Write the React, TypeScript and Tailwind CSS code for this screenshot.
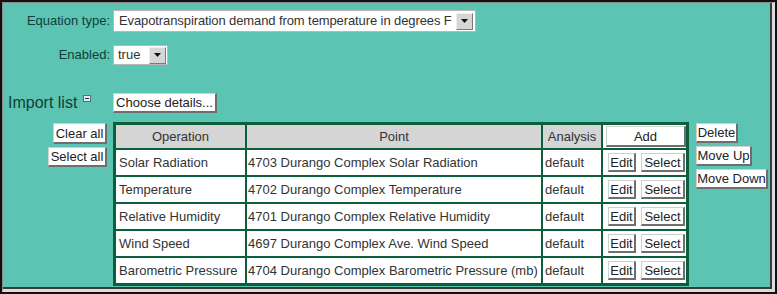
import React from "react";

const btn =
  "bg-white text-[#222] text-[13px] leading-none flex items-center justify-center whitespace-nowrap border-t border-l border-r-2 border-b-2 border-t-[#cfcfcf] border-l-[#cfcfcf] border-r-[#6e6e6e] border-b-[#6e6e6e]";

function Arrow() {
  return (
    <div className="w-[17px] h-[17px] bg-[#d6d6d6] border border-t-[#eeeeee] border-l-[#eeeeee] border-r-[#7a7a7a] border-b-[#7a7a7a] flex items-center justify-center">
      <svg width="7" height="4" viewBox="0 0 7 4">
        <path d="M0 0 H7 L3.5 4 Z" fill="#111" />
      </svg>
    </div>
  );
}

const rows = [
  ["Solar Radiation", "4703 Durango Complex Solar Radiation"],
  ["Temperature", "4702 Durango Complex Temperature"],
  ["Relative Humidity", "4701 Durango Complex Relative Humidity"],
  ["Wind Speed", "4697 Durango Complex Ave. Wind Speed"],
  ["Barometric Pressure", "4704 Durango Complex Barometric Pressure (mb)"],
];

export default function App() {
  return (
    <div className="w-[777px] h-[294px] border-2 border-[#111] font-['Liberation_Sans',Arial,sans-serif] text-[13px]">
      <div className="h-full border-t border-l border-r-[3px] border-b-[3px] border-t-[#8c8c8c] border-l-[#8c8c8c] border-r-[#dcdcdc] border-b-[#dcdcdc]">
        <div className="h-full bg-[#5bc4b3] border-r-2 border-b-2 border-[#3a3a3a] pt-[7px]">
          {/* Equation type */}
          <div className="flex items-center h-[22px]">
            <div className="w-[107px] text-right text-[#103f37]">Equation type:</div>
            <div className="ml-[3px] w-[363px] h-[22px] bg-white border border-[#b8b8b8] flex items-center justify-between pl-[5px] pr-[2px]">
              <span className="text-[#333] whitespace-nowrap tracking-[-0.1px]">
                Evapotranspiration demand from temperature in degrees F
              </span>
              <Arrow />
            </div>
          </div>

          {/* Enabled */}
          <div className="flex items-center h-[20px] mt-[13px]">
            <div className="w-[107px] text-right text-[#103f37]">Enabled:</div>
            <div className="ml-[3px] w-[55px] h-[20px] bg-white border border-[#b8b8b8] flex items-center justify-between pl-[4px] pr-[1px]">
              <span className="text-[#333]">true</span>
              <Arrow />
            </div>
          </div>

          {/* Import list */}
          <div className="flex items-center h-[20px] mt-[28px]">
            <div className="w-[110px] flex items-center pl-[5px]">
              <span className="text-[16px] leading-[18px] text-[#103f37]">Import list</span>
              <svg width="8" height="7" viewBox="0 0 8 7" className="ml-[6px] -mt-[10px]">
                <rect x="0.5" y="0.5" width="7" height="6" fill="#e8eef5" stroke="#5a6a7a" />
                <path d="M2 3.5 H6" stroke="#1a2a3a" strokeWidth="1" />
              </svg>
            </div>
            <button className={btn + " w-[104px] h-[20px]"}>Choose details...</button>
          </div>

          {/* Table area */}
          <div className="flex items-start mt-[9px]">
            <div className="w-[110px] flex flex-col items-end pr-[6px] gap-[3px] pt-[1px]">
              <button className={btn + " w-[54px] h-[21px]"}>Clear all</button>
              <button className={btn + " w-[59px] h-[20px]"}>Select all</button>
            </div>

            <table className="table-fixed w-[576px] border-separate [border-spacing:2px] bg-[#0b5f3a] border border-[#0b5f3a] text-[#333]">
              <thead>
                <tr>
                  <th className="w-[129px] h-[23px] p-0 bg-[#d5d5d5] font-normal text-center">Operation</th>
                  <th className="w-[294px] h-[23px] p-0 bg-[#d5d5d5] font-normal text-center">Point</th>
                  <th className="w-[58px] h-[23px] p-0 bg-[#d5d5d5] font-normal text-center">Analysis</th>
                  <th className="w-[83px] h-[23px] p-0 bg-white font-normal">
                    <div className="flex pl-[3px]">
                      <button className={btn + " w-[80px] h-[21px]"}>Add</button>
                    </div>
                  </th>
                </tr>
              </thead>
              <tbody>
                {rows.map(([op, pt]) => (
                  <tr key={op}>
                    <td className="h-[25px] p-0 pl-[3px] bg-white whitespace-nowrap">{op}</td>
                    <td className="h-[25px] p-0 pl-[1px] bg-white whitespace-nowrap">{pt}</td>
                    <td className="h-[25px] p-0 pl-[2px] bg-white whitespace-nowrap">default</td>
                    <td className="h-[25px] p-0 bg-white">
                      <div className="flex items-center pl-[5px] gap-[5px]">
                        <button className={btn + " w-[28px] h-[19px]"}>Edit</button>
                        <button className={btn + " w-[44px] h-[19px]"}>Select</button>
                      </div>
                    </td>
                  </tr>
                ))}
              </tbody>
            </table>

            <div className="ml-[7px] flex flex-col items-start gap-[3px] pt-[1px]">
              <button className={btn + " w-[42px] h-[20px]"}>Delete</button>
              <button className={btn + " w-[56px] h-[20px]"}>Move Up</button>
              <button className={btn + " w-[72px] h-[20px]"}>Move Down</button>
            </div>
          </div>
        </div>
      </div>
    </div>
  );
}
